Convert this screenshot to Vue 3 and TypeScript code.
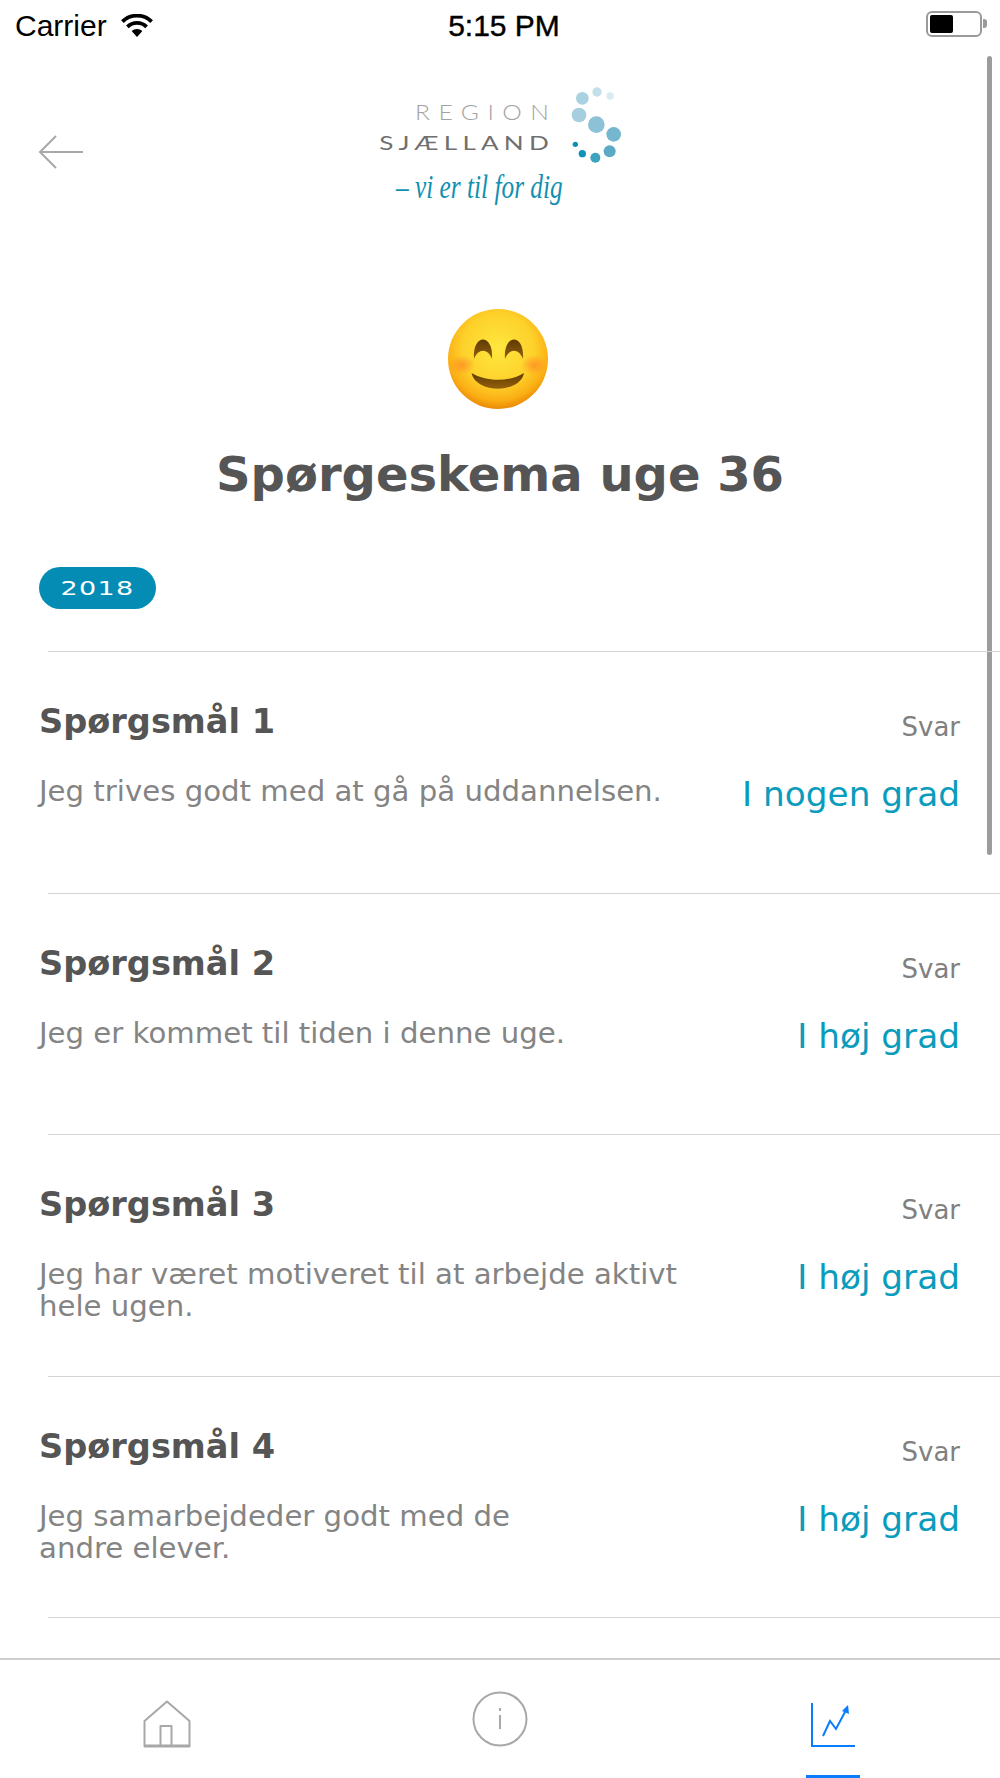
<script setup lang="ts">
interface Question {
	title: string;
	lines: string[];
	answer: string;
}

const questions: Question[] = [
	{ title: "Spørgsmål 1", lines: ["Jeg trives godt med at gå på uddannelsen."], answer: "I nogen grad" },
	{ title: "Spørgsmål 2", lines: ["Jeg er kommet til tiden i denne uge."], answer: "I høj grad" },
	{ title: "Spørgsmål 3", lines: ["Jeg har været motiveret til at arbejde aktivt", "hele ugen."], answer: "I høj grad" },
	{ title: "Spørgsmål 4", lines: ["Jeg samarbejdeder godt med de", "andre elever."], answer: "I høj grad" },
];

// logo dots, in the logo's 840x480 viewBox
const dots = [
	{ cx: 667, cy: 85, r: 19, fill: "#a9d2e1" },
	{ cx: 711, cy: 66, r: 14, fill: "#c3e0ea" },
	{ cx: 750, cy: 78, r: 11, fill: "#d8ebf2" },
	{ cx: 657, cy: 135, r: 22, fill: "#a5cfdf" },
	{ cx: 709, cy: 164, r: 25, fill: "#8cc1d6" },
	{ cx: 761, cy: 193, r: 22, fill: "#74b7cf" },
	{ cx: 749, cy: 244, r: 18, fill: "#5babc6" },
	{ cx: 706, cy: 263, r: 15, fill: "#3da3bf" },
	{ cx: 667, cy: 251, r: 11, fill: "#0f93b8" },
	{ cx: 646, cy: 223, r: 8, fill: "#0b8fb4" },
];
</script>

<template>
	<div class="phone">
		<div class="status-bar">
			<div class="carrier">
				<span>Carrier</span>
				<svg class="wifi" viewBox="0 0 34 24" width="34" height="24">
					<path d="M17 23 L11.6 17 A8 8 0 0 1 22.4 17 Z" fill="#000" />
					<path d="M7.4 12.8 A13.6 13.6 0 0 1 26.6 12.8" fill="none" stroke="#000" stroke-width="3.8" />
					<path d="M2.4 7.6 A20.8 20.8 0 0 1 31.6 7.6" fill="none" stroke="#000" stroke-width="3.8" />
				</svg>
			</div>
			<div class="clock">5:15 PM</div>
			<div class="battery">
				<div class="battery-body"><div class="battery-fill"></div></div>
				<div class="battery-tip"></div>
			</div>
		</div>

		<div class="content">
			<div class="scrollbar"></div>

			<div class="header">
				<svg class="back" viewBox="0 0 46 34" width="46" height="34">
					<path d="M45 17 H2 M18 1 L2 17 L18 33" fill="none" stroke="#a8a8a8" stroke-width="2" />
				</svg>
				<svg class="logo" viewBox="0 0 840 480" width="280" height="160">
					<text class="logo-region" x="165" y="150" textLength="427" lengthAdjust="spacingAndGlyphs">REGION</text>
					<text class="logo-sjaelland" x="58" y="240" textLength="524" lengthAdjust="spacingAndGlyphs">SJÆLLAND</text>
					<text class="logo-tag" x="108" y="384" textLength="500" lengthAdjust="spacingAndGlyphs">– vi er til for dig</text>
					<circle v-for="(d, i) in dots" :key="i" :cx="d.cx" :cy="d.cy" :r="d.r" :fill="d.fill" />
				</svg>
			</div>

			<svg class="emoji" viewBox="0 0 104 104" width="104" height="104">
				<defs>
					<radialGradient id="face" cx="50%" cy="40%" r="60%">
						<stop offset="0%" stop-color="#ffe73f" />
						<stop offset="60%" stop-color="#fdd12a" />
						<stop offset="86%" stop-color="#fbae14" />
						<stop offset="100%" stop-color="#ea8a06" />
					</radialGradient>
					<radialGradient id="blush">
						<stop offset="0%" stop-color="#ff8226" stop-opacity="0.7" />
						<stop offset="100%" stop-color="#ff8226" stop-opacity="0" />
					</radialGradient>
					<linearGradient id="feature" x1="0" y1="0" x2="0" y2="1">
						<stop offset="0%" stop-color="#5f3a03" />
						<stop offset="100%" stop-color="#94610c" />
					</linearGradient>
				</defs>
				<circle cx="52" cy="52" r="50" fill="url(#face)" />
				<ellipse cx="16" cy="58" rx="13" ry="10" fill="url(#blush)" />
				<ellipse cx="88" cy="58" rx="13" ry="10" fill="url(#blush)" />
				<path d="M28 52 C26 26 48 26 46 52 C42 41 32 41 28 52 Z" fill="url(#feature)" />
				<path d="M59 52 C57 26 79 26 77 52 C73 41 63 41 59 52 Z" fill="url(#feature)" />
				<path d="M25.5 66 C40 75 64 75 78 66 C74 87 30 87 25.5 66 Z" fill="url(#feature)" />
			</svg>

			<h1 class="title">Spørgeskema uge 36</h1>

			<div class="badge-row">
				<span class="badge"><span class="badge-text">2018</span></span>
			</div>

			<div class="question" v-for="q in questions" :key="q.title">
				<div class="question-left">
					<div class="question-title">{{ q.title }}</div>
					<div class="question-text">
						<div v-for="line in q.lines" :key="line">{{ line }}</div>
					</div>
				</div>
				<div class="question-right">
					<div class="svar">Svar</div>
					<div class="answer">{{ q.answer }}</div>
				</div>
			</div>
			<div class="question-end"></div>
		</div>

		<div class="tabbar">
			<div class="tab home">
				<svg viewBox="0 0 48 48" width="48" height="48">
					<path d="M1.5 46.5 V21 L24 1.5 L46.5 21 V46.5 Z M17.5 46.5 V26 H28.5 V46.5" fill="none" stroke="#a8a8a8" stroke-width="2" stroke-linejoin="round" />
					<path d="M1.5 45.5 H46.5" stroke="#a8a8a8" stroke-width="2" />
				</svg>
			</div>
			<div class="tab info">
				<svg viewBox="0 0 56 56" width="56" height="56">
					<circle cx="28" cy="28" r="26.5" fill="none" stroke="#a8a8a8" stroke-width="2" />
					<path d="M28 17 V20 M28 24 V38" stroke="#a8a8a8" stroke-width="2" />
				</svg>
			</div>
			<div class="tab stats">
				<svg viewBox="0 0 45 45" width="45" height="45">
					<path d="M1 0 V43 H44" fill="none" stroke="#0a7cff" stroke-width="2" />
					<path d="M12 33 L19 18 L25 26 L34.5 8" fill="none" stroke="#0a7cff" stroke-width="2" />
					<path d="M31 8 L37 2 L38 11 Z" fill="#0a7cff" />
				</svg>
				<div class="tab-line"></div>
			</div>
		</div>
	</div>
</template>

<style scoped>
.phone {
	width: 1000px;
	height: 1778px;
	display: flex;
	flex-direction: column;
	background: #fff;
	overflow: hidden;
	font-family: "DejaVu Sans", sans-serif;
}
.status-bar {
	height: 52px;
	flex: none;
	display: grid;
	grid-template-columns: 1fr auto 1fr;
	align-items: center;
	padding: 0 13px 0 15px;
	font-family: "Liberation Sans", sans-serif;
	font-size: 30px;
	color: #000;
}
.carrier {
	display: flex;
	align-items: center;
	gap: 13px;
}
.wifi {
	display: block;
}
.clock {
	margin-left: 6px;
	font-weight: 500;
	-webkit-text-stroke: 0.4px #000;
}
.battery {
	justify-self: end;
	display: flex;
	align-items: center;
	margin-bottom: 5px;
}
.battery-body {
	width: 56px;
	height: 26px;
	box-sizing: border-box;
	border: 2px solid #9a9a9a;
	border-radius: 6px;
	padding: 2px;
}
.battery-fill {
	width: 23px;
	height: 100%;
	background: #000;
	border-radius: 2px;
}
.battery-tip {
	width: 4px;
	height: 9px;
	background: #9a9a9a;
	border-radius: 0 3px 3px 0;
	margin-left: 1px;
}
.content {
	flex: 1;
	min-height: 0;
	position: relative;
	overflow: hidden;
}
.scrollbar {
	position: absolute;
	right: 8px;
	top: 4px;
	width: 5px;
	height: 799px;
	border-radius: 3px;
	background: #9c9c9c;
}
.header {
	height: 176px;
	display: flex;
	justify-content: center;
	position: relative;
}
.back {
	position: absolute;
	left: 38px;
	top: 83px;
}
.logo {
	margin-top: 18px;
}
.logo-region {
	font-family: Lato, "Liberation Sans", sans-serif;
	font-weight: 300;
	font-size: 64px;
	letter-spacing: 22px;
	fill: #a2a2a2;
}
.logo-sjaelland {
	font-family: Lato, "Liberation Sans", sans-serif;
	font-weight: 400;
	font-size: 60px;
	letter-spacing: 12px;
	fill: #6f6f6f;
}
.logo-tag {
	font-family: "Liberation Serif", serif;
	font-style: italic;
	font-size: 104px;
	fill: #1190b0;
}
.emoji {
	display: block;
	margin: 79px 0 0 446px;
}
.title {
	margin: 33px 0 0;
	text-align: center;
	font-size: 48px;
	line-height: 60px;
	font-weight: 700;
	color: #555;
}
.badge-row {
	margin: 63px 0 0 39px;
	height: 42px;
}
.badge {
	display: inline-flex;
	align-items: center;
	justify-content: center;
	width: 117px;
	height: 42px;
	border-radius: 21px;
	background: #048cb4;
	color: #fff;
	font-size: 20px;
	letter-spacing: 1px;
}
.badge-text {
	display: inline-block;
	transform: scaleX(1.35);
}
.question {
	box-sizing: border-box;
	height: 241.5px;
	padding: 50px 40px 0 39px;
	display: flex;
	justify-content: space-between;
	position: relative;
}
.question::before,
.question-end {
	content: "";
	display: block;
	height: 1px;
	background: #d4d4d4;
	margin-left: 48px;
}
.question::before {
	position: absolute;
	left: 0;
	right: 0;
	top: 0;
}
.badge-row + .question {
	margin-top: 42px;
}
.question-title {
	font-size: 33.6px;
	line-height: 42px;
	font-weight: 700;
	color: #555;
}
.question-text {
	margin-top: 32px;
	font-size: 29.2px;
	line-height: 32px;
	color: #848484;
}
.question-right {
	text-align: right;
}
.svar {
	font-size: 26px;
	line-height: 34px;
	margin-top: 9px;
	color: #808080;
}
.answer {
	margin-top: 30px;
	font-size: 34.3px;
	line-height: 40px;
	color: #0a9cbc;
}
.tabbar {
	height: 120px;
	flex: none;
	box-sizing: border-box;
	border-top: 2px solid #cfcfcf;
	display: grid;
	grid-template-columns: repeat(3, 1fr);
}
.tab {
	position: relative;
	display: flex;
	justify-content: center;
}
.home {
	padding-top: 40px;
}
.info {
	padding-top: 31px;
}
.stats {
	padding-top: 43px;
}
.tab svg {
	display: block;
}
.tab-line {
	position: absolute;
	bottom: 0;
	left: 50%;
	width: 54px;
	margin-left: -27px;
	height: 3px;
	background: #0a7cff;
}
</style>
